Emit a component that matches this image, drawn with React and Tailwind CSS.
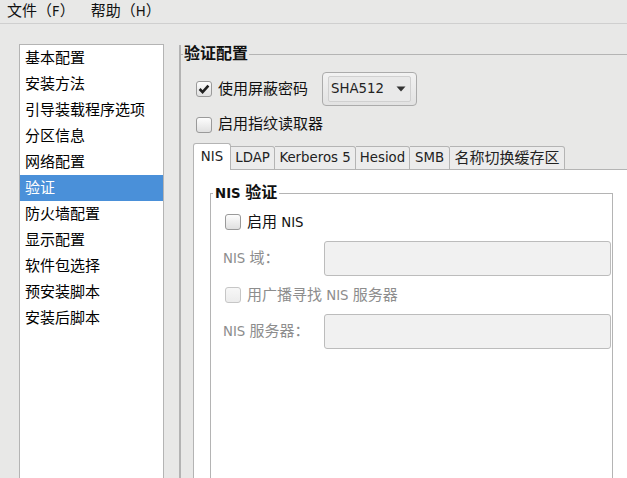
import React from "react";

const CJK = /([\u2E80-\u9FFF\uFF00-\uFFEF\u3000-\u303F]+)/;

function T({ children, cjk = "text-[15px]" }) {
  return String(children)
    .split(CJK)
    .filter((p) => p !== "")
    .map((p, i) =>
      CJK.test(p) ? (
        <span key={i} className={cjk}>
          {p}
        </span>
      ) : (
        <span key={i}>{p}</span>
      )
    );
}

function Check({ checked = false, disabled = false }) {
  return (
    <span
      className={
        disabled
          ? "w-[16px] h-[16px] shrink-0 rounded-[3px] border border-[#c6c6c6] bg-gradient-to-b from-[#f7f7f7] to-[#ececec] flex items-center justify-center"
          : "w-[16px] h-[16px] shrink-0 rounded-[3px] border border-[#9a9a9a] bg-gradient-to-b from-[#fdfdfd] to-[#e0e0e0] flex items-center justify-center"
      }
    >
      {checked && (
        <svg width="12" height="12" viewBox="0 0 12 12">
          <path d="M1.6 6 L4.6 9.1 L10.4 2.6" fill="none" stroke="#202020" strokeWidth="2.6" />
        </svg>
      )}
    </span>
  );
}

const items = [
  "基本配置",
  "安装方法",
  "引导装载程序选项",
  "分区信息",
  "网络配置",
  "验证",
  "防火墙配置",
  "显示配置",
  "软件包选择",
  "预安装脚本",
  "安装后脚本",
];

const tabs = [
  { t: "LDAP", w: "w-[44px]" },
  { t: "Kerberos 5", w: "w-[81px]" },
  { t: "Hesiod", w: "w-[54px]" },
  { t: "SMB", w: "w-[40px]" },
  { t: "名称切换缓存区", w: "w-[115px]" },
];

export default function App() {
  return (
    <div className="w-[627px] h-[478px] overflow-hidden bg-[#e8e8e7] text-[13.3px] text-[#111] font-['DejaVu_Sans','Noto_Sans_CJK_SC',sans-serif] flex flex-col">
      {/* menu bar */}
      <div className="h-[24px] shrink-0 border-b border-[#cfcfcf] flex items-center leading-none">
        <span className="ml-[7px]">
          <T>文件（F）</T>
        </span>
        <span className="ml-[16px]">
          <T>帮助（H）</T>
        </span>
      </div>

      <div className="flex flex-1 min-h-0">
        {/* left list */}
        <div className="mt-[20px] ml-[19px] w-[145px] h-[460px] shrink-0 border border-[#b4b4b4] bg-white text-black">
          {items.map((it) => (
            <div
              key={it}
              className={
                it === "验证"
                  ? "h-[26px] flex items-center pl-[5px] bg-[#4a90d9] text-white leading-none"
                  : "h-[26px] flex items-center pl-[5px] leading-none"
              }
            >
              <T>{it}</T>
            </div>
          ))}
        </div>

        {/* right panel */}
        <div className="mt-[21px] ml-[15px] flex-1 h-[460px] border-l-2 border-[#b3b3b3] flex flex-col">
          <div className="h-[18px] flex items-center">
            <div className="w-[2px] h-px bg-[#b4b4b4]" />
            <span className="font-bold leading-none px-[1px] text-[#111]">
              <T cjk="text-[16px]">验证配置</T>
            </span>
            <div className="flex-1 h-px bg-[#b4b4b4]" />
          </div>

          <div className="pl-[15px] flex flex-col">
            <div className="mt-[9px] h-[34px] flex items-center">
              <Check checked />
              <span className="ml-[6px] leading-none">
                <T>使用屏蔽密码</T>
              </span>
              <div className="ml-[14px] w-[95px] h-[34px] rounded-[4px] border border-[#ababab] bg-gradient-to-b from-[#f2f2f2] to-[#e2e2e2] px-[5px] py-[3px]">
                <div className="h-full rounded-[2px] border border-[#d0d0d0] bg-[#e9e9e9] flex items-center pl-[2px] pr-[4px] justify-between">
                  <span className="leading-none text-[#222]">SHA512</span>
                  <svg width="10" height="6" viewBox="0 0 10 6">
                    <path d="M0.5 0.5 L9.5 0.5 L5 5.5 Z" fill="#333" />
                  </svg>
                </div>
              </div>
            </div>

            <div className="mt-[5px] h-[27px] flex items-center">
              <Check />
              <span className="ml-[6px] leading-none">
                <T>启用指纹读取器</T>
              </span>
            </div>

            {/* notebook */}
            <div className="mt-[5px] -ml-[3px] flex flex-col">
              <div className="h-[27px] flex items-end">
                <div className="w-[38px] h-[27px] border-l border-t border-r border-[#b4b4b4] rounded-t-[3px] bg-white flex items-center justify-center pb-[1px] leading-none text-[#222]">
                  NIS
                </div>
                {tabs.map((tb) => (
                  <div
                    key={tb.t}
                    className={`${tb.w} h-[24px] border-t border-r border-b border-[#b4b4b4] rounded-tr-[3px] bg-[#ececec] flex items-center justify-center leading-none text-[#222]`}
                  >
                    <T>{tb.t}</T>
                  </div>
                ))}
                <div className="flex-1 self-stretch border-b border-[#b4b4b4]" />
              </div>

              <div className="h-[320px] bg-white border-l border-[#b4b4b4] pt-[15px] pl-[16px]">
                <fieldset className="w-[403px] h-[300px] border border-[#b4b4b4] m-0 p-0">
                  <legend className="ml-[2px] px-[2px] font-bold leading-[15px] text-[#111]">
                    <T cjk="text-[16px]">NIS 验证</T>
                  </legend>

                  <div className="mt-[8px] h-[26px] pl-[14px] flex items-center">
                    <Check />
                    <span className="ml-[6px] leading-none">
                      <T>启用 NIS</T>
                    </span>
                  </div>

                  <div className="mt-[6px] h-[35px] pl-[12px] flex items-center">
                    <span className="w-[101px] leading-none text-[#8d8d8d]">
                      <T>NIS 域：</T>
                    </span>
                    <div className="w-[287px] h-[35px] rounded-[3px] border border-[#bcbcbc] bg-[#f1f1f1]" />
                  </div>

                  <div className="mt-[6px] h-[26px] pl-[14px] flex items-center">
                    <Check disabled />
                    <span className="ml-[6px] leading-none text-[#8d8d8d]">
                      <T>用广播寻找 NIS 服务器</T>
                    </span>
                  </div>

                  <div className="mt-[6px] h-[35px] pl-[12px] flex items-center">
                    <span className="w-[101px] leading-none text-[#8d8d8d]">
                      <T>NIS 服务器：</T>
                    </span>
                    <div className="w-[287px] h-[35px] rounded-[3px] border border-[#bcbcbc] bg-[#f1f1f1]" />
                  </div>
                </fieldset>
              </div>
            </div>
          </div>
        </div>
      </div>
    </div>
  );
}
